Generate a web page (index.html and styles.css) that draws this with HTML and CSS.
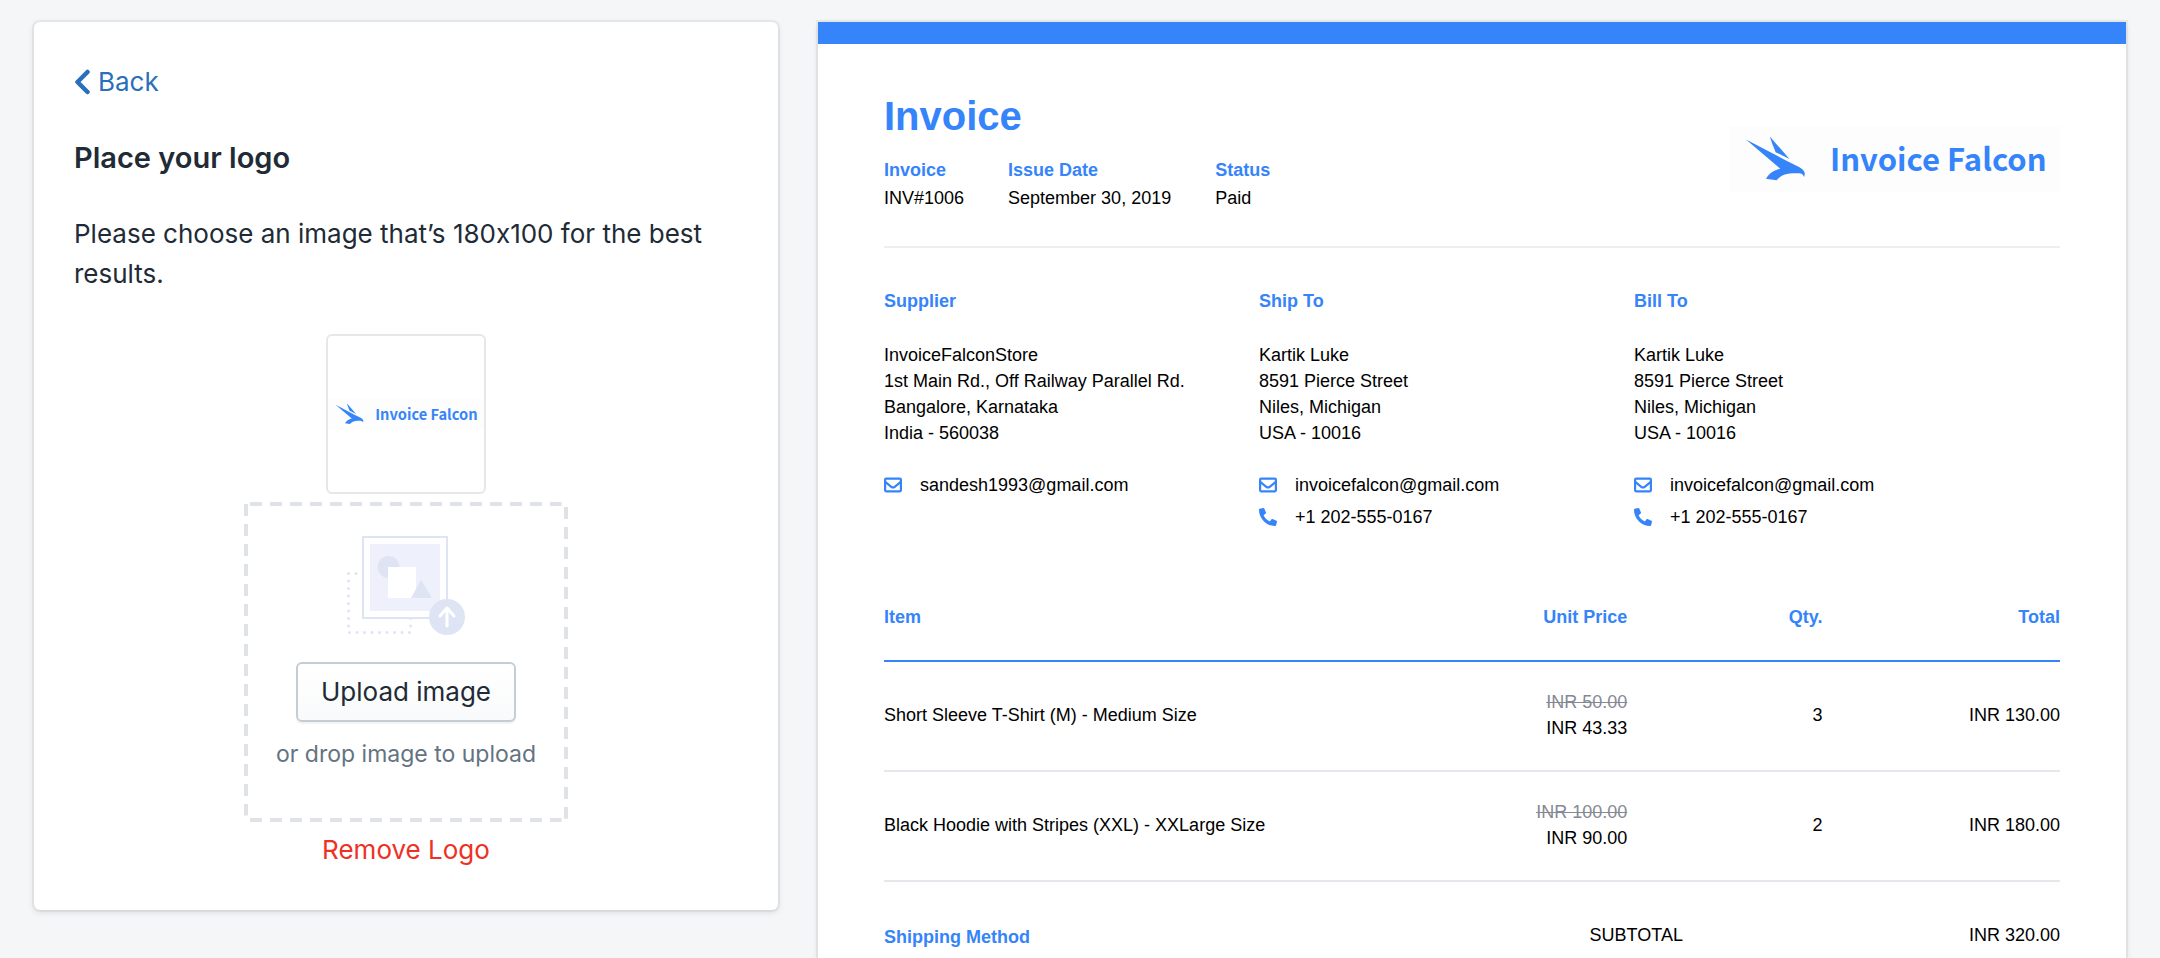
FILE: index.html
```
<!DOCTYPE html>
<html lang="en">
<head>
<meta charset="utf-8">
<title>Invoice Falcon – Place your logo</title>
<link rel="stylesheet" href="styles.css">
</head>
<body>
<svg class="defs" aria-hidden="true">
  <symbol id="falcon-logo" viewBox="0 0 330 66">
    <rect width="330" height="66" fill="#fdfdfd"/>
    <g fill="#3584f9">
      <path d="M16 13.500 L56 34.500 L69 41 C72.500 43 74.500 45 74.800 47.500 L74.300 51 C73 48.500 72 47.300 69 47.200 C56 46.800 51.500 48.500 46.500 54.300 L36 52.800 C39.500 47 43.500 44.500 50.300 42.700 Z"/>
      <path d="M39.800 10.500 L59.500 33 L45.600 26.200 C43.500 21 41.500 16 39.800 10.500 Z"/>
    </g>
    <text class="logo-text" x="100" y="45">Invoice Falcon</text>
  </symbol>
  <symbol id="mail" viewBox="0 0 18 18">
    <rect x="1.100" y="2.700" width="15.800" height="12.600" rx="1" fill="none" stroke="#3584f9" stroke-width="2.200"/>
    <path d="M1.500 6.200 7.600 11Q9 12 10.400 11L16.500 6.200" fill="none" stroke="#3584f9" stroke-width="2.200"/>
  </symbol>
  <symbol id="phone" viewBox="0 0 512 512">
    <path d="M18.600 24.300 122.600 .6c11.300-2.600 22.900 3.300 27.500 13.900l48 112c4.200 9.800 1.400 21.300-6.900 28l-60.600 49.600c36 76.700 98.900 140.500 177.200 177.200l49.600-60.600c6.800-8.300 18.200-11.100 28-6.900l112 48c10.700 4.600 16.500 16.200 13.900 27.500l-24 104c-2.500 10.800-12.100 18.600-23.400 18.600C207.900 512 0 304.500 0 48c0-11.200 7.700-20.900 18.600-23.700z"/>
  </symbol>
</svg>

<main class="page">
  <section class="card">
    <a class="back" href="#"><svg class="chevron" viewBox="0 0 16 26" aria-hidden="true"><path d="M13.500 3 3.500 13l10 10" fill="none" stroke="currentColor" stroke-width="4.500" stroke-linecap="round" stroke-linejoin="round"/></svg>Back</a>
    <h1 class="card-title">Place your logo</h1>
    <p class="card-text">Please choose an image that’s 180x100 for the best results.</p>
    <div class="uploader">
      <div class="thumb"><svg class="thumb-logo" role="img" aria-label="Invoice Falcon"><use href="#falcon-logo"/></svg></div>
      <div class="dropzone">
        <svg class="dashes" aria-hidden="true">
          <line x1="6" y1="2" x2="98%" y2="2"/>
          <line x1="6" y1="100%" x2="98%" y2="100%" class="bottom"/>
          <line x1="2" y1="2" x2="2" y2="98%"/>
          <line x1="100%" y1="5" x2="100%" y2="99%" class="right"/>
        </svg>
        <svg class="picture" viewBox="0 0 120 100" aria-hidden="true">
          <path d="M2.500 37.500h16M2.500 37.500v59h62v-16" fill="none" stroke="#dfe4f5" stroke-width="3" stroke-dasharray="0 7.500" stroke-linecap="round"/>
          <rect x="17" y="1" width="84" height="81" fill="#fff" stroke="#dfe4f5" stroke-width="2"/>
          <rect x="24" y="8" width="70" height="67" fill="#eef1fb"/>
          <circle cx="42.500" cy="31" r="11" fill="#dfe4f5"/>
          <rect x="42" y="31" width="28" height="31" fill="#fff"/>
          <path d="M75 44 86 62H65Z" fill="#dfe4f5"/>
          <circle cx="101" cy="81" r="18" fill="#dfe4f5"/>
          <path d="M101 90V73M94 80l7-8 7 8" fill="none" stroke="#fff" stroke-width="3" stroke-linecap="round" stroke-linejoin="round"/>
        </svg>
        <button class="upload" type="button">Upload image</button>
        <p class="hint">or drop image to upload</p>
      </div>
      <button class="remove" type="button">Remove Logo</button>
    </div>
  </section>

  <article class="invoice">
    <header class="invoice-head">
      <div>
        <h2 class="invoice-title">Invoice</h2>
        <dl class="meta">
          <div><dt>Invoice</dt><dd>INV#1006</dd></div>
          <div><dt>Issue Date</dt><dd>September 30, 2019</dd></div>
          <div><dt>Status</dt><dd>Paid</dd></div>
        </dl>
      </div>
      <svg class="logo" role="img" aria-label="Invoice Falcon"><use href="#falcon-logo"/></svg>
    </header>

    <section class="parties">
      <div>
        <h3 class="label">Supplier</h3>
        <address class="address">InvoiceFalconStore<br>1st Main Rd., Off Railway Parallel Rd.<br>Bangalore, Karnataka<br>India - 560038</address>
        <p class="contact"><svg class="icon" aria-hidden="true"><use href="#mail"/></svg>sandesh1993@gmail.com</p>
      </div>
      <div>
        <h3 class="label">Ship To</h3>
        <address class="address">Kartik Luke<br>8591 Pierce Street<br>Niles, Michigan<br>USA - 10016</address>
        <p class="contact"><svg class="icon" aria-hidden="true"><use href="#mail"/></svg>invoicefalcon@gmail.com</p>
        <p class="contact"><svg class="icon" aria-hidden="true"><use href="#phone"/></svg>+1 202-555-0167</p>
      </div>
      <div>
        <h3 class="label">Bill To</h3>
        <address class="address">Kartik Luke<br>8591 Pierce Street<br>Niles, Michigan<br>USA - 10016</address>
        <p class="contact"><svg class="icon" aria-hidden="true"><use href="#mail"/></svg>invoicefalcon@gmail.com</p>
        <p class="contact"><svg class="icon" aria-hidden="true"><use href="#phone"/></svg>+1 202-555-0167</p>
      </div>
    </section>

    <table class="items">
      <colgroup><col class="c-item"><col class="c-price"><col class="c-qty"><col class="c-total"></colgroup>
      <thead><tr><th>Item</th><th>Unit Price</th><th>Qty.</th><th>Total</th></tr></thead>
      <tbody>
        <tr><td>Short Sleeve T-Shirt (M) - Medium Size</td><td><del>INR 50.00</del>INR 43.33</td><td>3</td><td>INR 130.00</td></tr>
        <tr><td>Black Hoodie with Stripes (XXL) - XXLarge Size</td><td><del>INR 100.00</del>INR 90.00</td><td>2</td><td>INR 180.00</td></tr>
      </tbody>
    </table>

    <footer class="summary">
      <h3 class="label">Shipping Method</h3>
      <div class="sum-row"><span>SUBTOTAL</span><span>INR 320.00</span></div>
    </footer>
  </article>
</main>
</body>
</html>
```
FILE: styles.css
```
* { box-sizing: border-box; }
body {
  margin: 0;
  background: #f4f6f8;
  color: #212b36;
  font-family: Inter, "Liberation Sans", sans-serif;
}
h1, h2, h3, p, dl, dd { margin: 0; }
.defs { position: absolute; width: 0; height: 0; }

.page {
  display: grid;
  grid-template-columns: 744fr 1308fr;
  column-gap: 40px;
  align-items: start;
  padding: 22px 34px 0;
}

.card {
  padding: 40px 40px 40px;
  background: #fff;
  border-radius: 6px;
  box-shadow: 0 0 0 2px rgba(63, 63, 68, .06), 0 2px 6px rgba(63, 63, 68, .15);
  font-size: 26px;
  font-variant-ligatures: no-contextual;
  line-height: 40px;
}
.back {
  display: flex;
  align-items: center;
  gap: 8px;
  color: #2a6fbb;
  text-decoration: none;
}
.chevron { width: 16px; height: 26px; }
.card-title { margin-top: 36px; font-size: 29px; font-weight: 600; }
.card-text { margin-top: 36px; }

.uploader { display: flex; flex-direction: column; align-items: center; margin-top: 40px; }
.thumb {
  display: flex;
  align-items: center;
  width: 160px;
  height: 160px;
  border: 2px solid #e7e7e7;
  border-radius: 6px;
}
.thumb-logo { width: 100%; height: 32px; }
.logo-text {
  fill: #3584f9;
  font: bold 31px "Noto Sans CJK JP", sans-serif;
}
.dropzone {
  position: relative;
  display: flex;
  flex-direction: column;
  align-items: center;
  width: 324px;
  height: 320px;
  margin-top: 8px;
  padding-top: 34px;
}
.dashes { position: absolute; inset: 0; width: 100%; height: 100%; }
.dashes line { stroke: #dfe3e8; stroke-width: 4; stroke-dasharray: 12 8; }
.dashes .bottom { transform: translateY(-2px); }
.dashes .right { transform: translateX(-2px); }
.picture { width: 120px; height: 100px; }
.upload {
  width: 220px;
  height: 60px;
  margin-top: 26px;
  padding: 0;
  border: 2px solid #c4cdd5;
  border-radius: 6px;
  background: linear-gradient(#fff, #f9fafb);
  box-shadow: 0 2px 0 rgba(22, 29, 37, .05);
  color: #212b36;
  font: inherit;
}
.hint { margin-top: 12px; color: #637381; font-size: 23px; }
.remove {
  margin-top: 8px;
  padding: 0;
  border: 0;
  background: none;
  color: #ee3124;
  font: inherit;
}

.invoice {
  min-height: calc(100vh - 22px);
  padding: 50px 66px 0;
  border-top: 22px solid #3584f9;
  background: #fff;
  box-shadow: 0 0 0 2px rgba(63, 63, 68, .06), 0 2px 6px rgba(63, 63, 68, .15);
  color: #000;
  font: 18px/26px "Liberation Sans", Arial, sans-serif;
}
.invoice-head {
  display: flex;
  justify-content: space-between;
  align-items: flex-end;
  padding-bottom: 34px;
  border-bottom: 2px solid #eee;
}
.invoice-title { color: #3584f9; font-size: 40px; line-height: 44px; }
.meta { display: flex; gap: 44px; margin-top: 18px; line-height: 28px; }
.meta dt, .label { color: #3584f9; font-size: 18px; font-weight: bold; }
.logo { width: 330px; height: 66px; margin-bottom: 20px; }

.parties {
  display: grid;
  grid-template-columns: repeat(3, 1fr);
  padding: 40px 51px 0 0;
}
.address { margin: 28px 0 26px; font-style: normal; }
.contact { display: flex; align-items: center; gap: 18px; margin-bottom: 6px; }
.icon { width: 18px; height: 18px; fill: #3584f9; }

.items {
  width: 100%;
  margin-top: 68px;
  border-collapse: separate;
  border-spacing: 0;
  table-layout: fixed;
}
.c-item { width: 46%; }
.c-price { width: 17.2%; }
.c-qty { width: 16.6%; }
.items th {
  padding: 0 0 30px;
  border-bottom: 2px solid #3584f9;
  color: #3584f9;
  text-align: right;
}
.items td {
  padding: 27px 0 29px;
  border-bottom: 2px solid #e6e7ec;
  text-align: right;
}
.items th:first-child, .items td:first-child { text-align: left; }
.items del { display: block; color: #868993; }

.summary { display: grid; grid-template-columns: 3fr 2fr; align-items: start; padding-top: 40px; }
.summary .label { padding-top: 2px; }
.sum-row { display: flex; justify-content: space-between; }
```
